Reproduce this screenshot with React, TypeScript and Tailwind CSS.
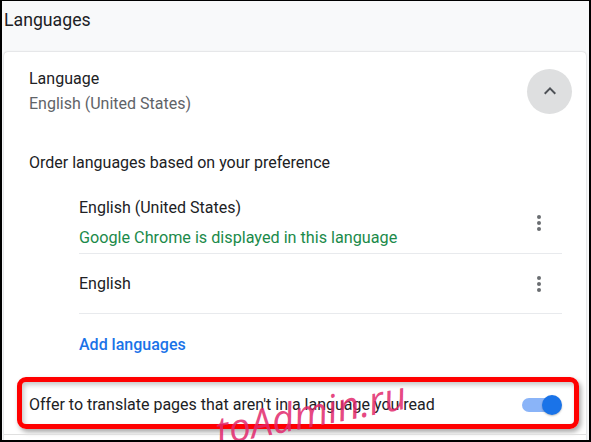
import type { ReactNode } from 'react';

function Kebab() {
  return (
    <div className="flex flex-col items-center gap-[2px]">
      <span className="h-[4px] w-[4px] rounded-full bg-[#6a6d71]" />
      <span className="h-[4px] w-[4px] rounded-full bg-[#6a6d71]" />
      <span className="h-[4px] w-[4px] rounded-full bg-[#6a6d71]" />
    </div>
  );
}

function LangRow({ children, className }: { children: ReactNode; className?: string }) {
  return (
    <div className={`flex items-center justify-between border-b border-[#e8eaed] ${className ?? ''}`}>
      <div>{children}</div>
      <div className="mr-[21px]">
        <Kebab />
      </div>
    </div>
  );
}

function Toggle() {
  return (
    <div className="relative h-[20px] w-[40px]">
      <div className="mt-[3px] h-[14px] w-[34px] rounded-full bg-[#8ab4f8]" />
      <div className="absolute top-0 right-0 h-[20px] w-[20px] rounded-full bg-[#1a73e8] shadow-[0_1px_2px_rgba(0,0,0,0.25)]" />
    </div>
  );
}

export default function App() {
  return (
    <div
      className="relative h-[442px] w-[591px] overflow-hidden border-t border-r-2 border-b-2 border-l-2 border-black bg-[#f8f9fa] text-[16px] leading-[25px] text-[#202124]"
      style={{ fontFamily: 'Roboto, "Liberation Sans", sans-serif' }}
    >
      {/* Section title */}
      <div className="h-[51px] pt-[9px] pl-[2px] text-[17.7px] leading-[20px]">Languages</div>

      {/* Card */}
      <div className="mr-[3px] ml-[2px] h-[420px] rounded-t-[4px] bg-white shadow-[0_0_2px_rgba(60,64,67,0.35)]">
        <div className="flex items-center justify-between pt-[14px] pr-[14px] pl-[25px]">
          <div>
            <div>Language</div>
            <div className="text-[#5f6368]">English (United States)</div>
          </div>
          <button
            type="button"
            aria-label="Collapse"
            className="flex h-[45px] w-[45px] items-center justify-center rounded-full bg-[#dedfe0]"
          >
            <svg width="24" height="24" viewBox="0 0 24 24" fill="#4d5156">
              <path d="M12 8l-6 6 1.41 1.41L12 10.83l4.59 4.58L18 14z" />
            </svg>
          </button>
        </div>

        <div className="mt-[34px] pl-[25px]">Order languages based on your preference</div>

        <div className="mr-[24px] ml-[75px]">
          <LangRow className="pt-[20px] pb-[3px]">
            <div>English (United States)</div>
            <div className="mt-[5px] text-[16.2px] text-[#1b8a4a]">Google Chrome is displayed in this language</div>
          </LangRow>
          <LangRow className="h-[60px]">
            <div>English</div>
          </LangRow>
          <div className="mt-[18px] font-medium text-[#1a73e8]">Add languages</div>
        </div>

        {/* Highlighted translate row */}
        <div className="mt-[20px] mr-[7px] ml-[13px] flex h-[52px] items-center justify-between rounded-[9px] border-[5px] border-[#ff0000] pt-[3px] pr-[12px] pl-[7px] shadow-[2px_3px_5px_rgba(0,0,0,0.35),inset_2px_3px_5px_rgba(0,0,0,0.22)]">
          <span>Offer to translate pages that aren't in a language you read</span>
          <Toggle />
        </div>

        <div className="mt-[5px] border-t border-[#e0e0e0]" />
      </div>

      {/* Watermark */}
      <div
        className="pointer-events-none absolute top-[389px] left-[212px] -rotate-[11deg] text-[39px] leading-[44px] font-medium text-[#e2286c]/85 italic"
        style={{ fontFamily: '"Open Sans", "DejaVu Sans", sans-serif' }}
      >
        toAdmin.ru
      </div>
    </div>
  );
}
